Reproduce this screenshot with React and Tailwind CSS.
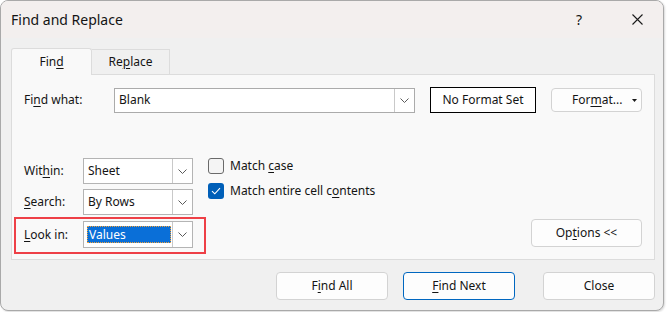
import React from "react";

const font = { fontFamily: '"Noto Sans", "Open Sans", sans-serif' };

function U({ children }) {
  return <span className="underline underline-offset-2 decoration-1">{children}</span>;
}

function Chevron() {
  return (
    <svg width="9" height="5" viewBox="0 0 9 5" fill="none">
      <path d="M0.5 0.5 L4.5 4.5 L8.5 0.5" stroke="#5a5a5a" strokeWidth="1" />
    </svg>
  );
}

function Select({ value, highlighted, tall }) {
  return (
    <div
      className={`flex w-[110px] ${tall ? "h-[27px]" : "h-[26px]"} border border-[#b4b4b4] bg-white`}
    >
      <div className="flex-1 flex items-center pl-[3px] pr-[1px]">
        {highlighted ? (
          <div className="w-full h-[17px] bg-[#0a6fd8] border border-dotted border-[#f2a23a] text-white flex items-center pl-[1px] text-[12px] leading-none">
            {value}
          </div>
        ) : (
          <span className="text-[12px] text-[#141414] pl-[1px]">{value}</span>
        )}
      </div>
      <div className="w-[20px] border-l border-[#c9c9c9] flex items-center justify-center bg-white">
        <Chevron />
      </div>
    </div>
  );
}

function Btn({ children, w, primary, className = "" }) {
  return (
    <div
      className={`flex items-center justify-center h-[28px] ${w} rounded-[4px] border bg-[#fdfdfd] text-[12px] text-[#141414] ${
        primary ? "border-[#0067c0]" : "border-[#d3d3d3]"
      } ${className}`}
    >
      {children}
    </div>
  );
}

export default function App() {
  return (
    <div className="w-[667px] h-[312px] bg-white" style={font}>
      <div className="w-[664px] h-[311px] rounded-[8px] border border-[#a9a9a9] bg-[#f0f0f0] overflow-hidden flex flex-col shadow-[1px_1px_2px_rgba(0,0,0,0.15)]">
        {/* Title bar */}
        <div className="h-[37px] bg-[#f3efee] flex items-center pl-[10px] pr-[20px]">
          <span className="text-[14px] text-[#141414] flex-1">Find and Replace</span>
          <span className="text-[14px] text-[#141414] mr-[50px]">?</span>
          <svg width="11" height="11" viewBox="0 0 11 11">
            <path d="M0.5 0.5 L10.5 10.5 M10.5 0.5 L0.5 10.5" stroke="#1a1a1a" strokeWidth="1.1" />
          </svg>
        </div>

        {/* Body */}
        <div className="flex-1 px-[10px] pt-[10px] flex flex-col">
          {/* Tabs */}
          <div className="flex items-end h-[26px]">
            <div className="w-[81px] h-[27px] -mb-px relative z-10 bg-[#f9f9f9] border border-b-0 border-[#dcdcdc] rounded-t-[3px] flex items-center justify-center text-[12px] text-[#141414]">
              Fin<U>d</U>
            </div>
            <div className="w-[78px] h-[25px] bg-[#f0f0f0] border border-l-0 border-b-0 border-[#dcdcdc] flex items-center justify-center text-[12px] text-[#141414]">
              Re<U>p</U>lace
            </div>
          </div>

          {/* Panel */}
          <div className="w-[644px] h-[186px] bg-[#f9f9f9] border border-[#dcdcdc] flex flex-col px-[12px] pt-[12px] pb-[11px]">
            {/* Find what row */}
            <div className="flex items-center h-[26px]">
              <span className="w-[90px] text-[12px] text-[#141414]">
                Fi<U>n</U>d what:
              </span>
              <div className="flex w-[301px] h-[25px] border border-[#ababab] bg-white">
                <div className="flex-1 flex items-center pl-[4px] text-[12px] text-[#141414]">Blank</div>
                <div className="w-[20px] border-l border-[#c9c9c9] flex items-center justify-center">
                  <Chevron />
                </div>
              </div>
              <div className="ml-[15px] w-[106px] h-[26px] border border-black bg-white flex items-center justify-center text-[12px] text-[#141414]">
                No Format Set
              </div>
              <div className="ml-[15px] w-[91px] h-[24px] rounded-[4px] border border-[#d3d3d3] bg-[#fdfdfd] flex items-center text-[12px] text-[#141414] pl-[20px] pr-[4px]">
                <span className="flex-1">
                  For<U>m</U>at...
                </span>
                <svg width="5" height="3" viewBox="0 0 5 3">
                  <path d="M0 0 L5 0 L2.5 3 Z" fill="#1a1a1a" />
                </svg>
              </div>
            </div>

            <div className="flex-1" />

            {/* Lower area */}
            <div className="flex items-end">
              <div className="flex flex-col gap-[5px]">
                <div className="flex items-center">
                  <span className="w-[59px] text-[12px] text-[#141414]">
                    Wit<U>h</U>in:
                  </span>
                  <Select value="Sheet" />
                </div>
                <div className="flex items-center">
                  <span className="w-[59px] text-[12px] text-[#141414]">
                    <U>S</U>earch:
                  </span>
                  <Select value="By Rows" />
                </div>
                <div className="flex items-center relative mt-[1px]">
                  <span className="w-[59px] text-[12px] text-[#141414]">
                    <U>L</U>ook in:
                  </span>
                  <Select value="Values" highlighted tall />
                  <div className="absolute left-[-10px] top-[-4px] w-[192px] h-[37px] border-2 border-[#ee4047] pointer-events-none" />
                </div>
              </div>

              <div className="flex flex-col self-start ml-[15px] gap-[9px]">
                <div className="flex items-center h-[16px]">
                  <div className="w-[16px] h-[16px] rounded-[3px] border border-[#6a6a6a] bg-[#f4f4f4]" />
                  <span className="ml-[6px] text-[12px] text-[#141414]">
                    Match <U>c</U>ase
                  </span>
                </div>
                <div className="flex items-center h-[16px]">
                  <div className="w-[16px] h-[16px] rounded-[3px] bg-[#005fb8] flex items-center justify-center">
                    <svg width="10" height="8" viewBox="0 0 10 8" fill="none">
                      <path d="M1 4.2 L3.8 6.8 L9 1.2" stroke="white" strokeWidth="1.1" />
                    </svg>
                  </div>
                  <span className="ml-[6px] text-[12px] text-[#141414]">
                    Match entire cell c<U>o</U>ntents
                  </span>
                </div>
              </div>

              <div className="flex-1" />
              <Btn w="w-[111px]" className="mb-[1px]">
                Op<U>t</U>ions &lt;&lt;
              </Btn>
            </div>
          </div>

          {/* Bottom buttons */}
          <div className="flex justify-end pt-[12px]">
            <div className="flex mr-[-2px]">
              <Btn w="w-[112px]">
                F<U>i</U>nd All
              </Btn>
              <Btn w="w-[112px]" primary className="ml-[15px]">
                <U>F</U>ind Next
              </Btn>
              <Btn w="w-[112px]" className="ml-[28px]">
                Close
              </Btn>
            </div>
          </div>
        </div>
      </div>
    </div>
  );
}
